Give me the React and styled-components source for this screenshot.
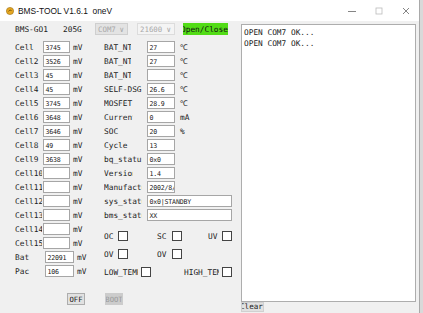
import React from 'react';
import styled, { createGlobalStyle } from 'styled-components';

const mono = '"DejaVu Sans Mono", "Liberation Mono", monospace';

const GlobalStyle = createGlobalStyle`
  html, body { margin: 0; padding: 0; background: #d9d9d9; }
  body { font-family: ${mono}; }
`;

const Window = styled.div`
  width: 419px;
  height: 313px;
  background: #f0f0f0;
  border-right: 1px solid #a9a9a9;
  display: flex;
  flex-direction: column;
  overflow: hidden;
  color: #222;
`;

const TitleBar = styled.div`
  height: 21px;
  flex: none;
  background: #fff;
  display: flex;
  align-items: center;
  padding-left: 6px;
  font: 8.4px "Liberation Sans", Arial, sans-serif;
  color: #111;
`;

const TitleText = styled.span`
  margin-left: 4px;
  white-space: pre;
`;

const Controls = styled.div`
  margin-left: auto;
  display: flex;
  height: 100%;
`;

const Ctrl = styled.div`
  width: 27px;
  display: flex;
  align-items: center;
  justify-content: center;
`;

const Body = styled.div`
  flex: 1;
  display: flex;
`;

const LeftPanel = styled.div`
  width: 241px;
  flex: none;
  display: flex;
  flex-direction: column;
  padding-left: 15px;
  box-sizing: border-box;
  font-size: 7.8px;
`;

const TopRow = styled.div`
  display: flex;
  align-items: center;
  height: 12px;
  margin-top: 2px;
`;

const TopLabel = styled.span`
  width: ${p => p.$w}px;
  flex: none;
`;

const Combo = styled.div`
  width: ${p => p.$w}px;
  height: 12px;
  box-sizing: border-box;
  margin-right: ${p => p.$mr || 0}px;
  border: 1px solid ${p => (p.$dark ? '#cfcfcf' : '#dcdcdc')};
  background: ${p => (p.$dark ? '#e3e3e3' : '#f4f4f4')};
  color: #a8a8a8;
  display: flex;
  align-items: center;
  justify-content: space-between;
  padding: 0 3px 0 2px;
  font-size: 7.4px;
`;

const GreenButton = styled.div`
  width: 45px;
  height: 12px;
  background: #52dc16;
  color: #111;
  font-size: 7.8px;
  overflow: hidden;
  white-space: nowrap;
  display: flex;
  align-items: center;
  justify-content: center;
  text-indent: -2px;
`;

const Columns = styled.div`
  display: flex;
  margin-top: 5px;
`;

const Column = styled.div`
  width: ${p => p.$w}px;
  flex: none;
  display: flex;
  flex-direction: column;
`;

const Row = styled.div`
  height: 14px;
  display: flex;
  align-items: center;
`;

const Label = styled.span`
  width: ${p => p.$w}px;
  margin-right: ${p => p.$mr || 0}px;
  flex: none;
  overflow: hidden;
  white-space: nowrap;
`;

const Field = styled.div`
  width: ${p => p.$w}px;
  height: 12px;
  flex: none;
  box-sizing: border-box;
  background: #fff;
  border: 1px solid #a6a6a6;
  padding: 2px 0 0 1.5px;
  font-size: 6.6px;
  letter-spacing: -0.2px;
  line-height: 9px;
  white-space: nowrap;
  overflow: hidden;
`;

const Unit = styled.span`
  margin-left: ${p => p.$ml || 3}px;
`;

const CheckRows = styled.div`
  margin-top: 5px;
  display: flex;
  flex-direction: column;
`;

const CheckRow = styled.div`
  height: 18px;
  display: grid;
  grid-template-columns: ${p => p.$cols};
  align-items: center;
`;

const CheckCell = styled.div`
  display: flex;
  align-items: center;
`;

const Box = styled.div`
  width: 10px;
  height: 10px;
  box-sizing: border-box;
  background: #fff;
  border: 1px solid #444;
`;

const SmallButton = styled.div`
  width: 18px;
  height: 12px;
  margin-left: ${p => p.$ml}px;
  margin-top: ${p => p.$mt}px;
  box-sizing: border-box;
  border: 1px solid ${p => (p.$disabled ? '#cccccc' : '#adadad')};
  background: ${p => (p.$disabled ? '#cccccc' : '#e1e1e1')};
  color: ${p => (p.$disabled ? '#9a9a9a' : '#222')};
  font-size: 7.2px;
  display: flex;
  align-items: center;
  justify-content: center;
  overflow: hidden;
  white-space: nowrap;
`;

const LogPanel = styled.div`
  width: 175px;
  display: flex;
  flex-direction: column;
  padding-top: 3px;
`;

const Log = styled.div`
  height: 278px;
  box-sizing: border-box;
  background: #fff;
  border: 1px solid #adadad;
  padding: 3px 2px;
  font-size: 7.8px;
  line-height: 10.5px;
`;

const ClearButton = styled.div`
  width: 23px;
  height: 10px;
  background: #e1e1e1;
  border: 1px solid #d0d0d0;
  box-sizing: border-box;
  font-size: 7.6px;
  line-height: 8px;
  overflow: hidden;
  white-space: nowrap;
  text-indent: -2px;
`;

const cells = [
  ['Cell', '3745'], ['Cell2', '3526'], ['Cell3', '45'], ['Cell4', '45'],
  ['Cell5', '3745'], ['Cell6', '3648'], ['Cell7', '3646'], ['Cell8', '49'],
  ['Cell9', '3638'], ['Cell10', ''], ['Cell11', ''], ['Cell12', ''],
  ['Cell13', ''], ['Cell14', ''], ['Cell15', ''],
];

// name, visible label width, value, unit
const info = [
  ['BAT_NTC1', 27, '27', '℃'], ['BAT_NTC2', 27, '27', '℃'], ['BAT_NTC3', 27, '', '℃'],
  ['SELF-DSG', 43, '26.6', '℃'], ['MOSFET', 43, '28.9', '℃'], ['Current', 29, '0', 'mA'],
  ['SOC', 43, '20', '%'], ['Cycle', 43, '13', ''], ['bq_status', 37.5, '0x0', ''],
  ['Version', 29, '1.4', ''], ['Manufacture', 38, '2002/8/', ''],
];

const Check = ({ label, w, mr }) => (
  <CheckCell>
    <Label $w={w} $mr={mr}>{label}</Label>
    <Box />
  </CheckCell>
);

export default function App() {
  return (
    <>
      <GlobalStyle />
      <Window>
        <TitleBar>
          <svg width="8" height="8" viewBox="0 0 8 8">
            <circle cx="4" cy="4" r="3.6" fill="#e6a822" stroke="#9a6d10" strokeWidth="0.6" />
            <path d="M2.4 4.4 Q4 2 5.6 3.6" stroke="#6b4a08" strokeWidth="0.8" fill="none" />
          </svg>
          <TitleText>BMS-TOOL V1.6.1  oneV</TitleText>
          <Controls>
            <Ctrl>
              <svg width="8" height="8" viewBox="0 0 8 8"><path d="M0 4.5h8" stroke="#666" strokeWidth="0.8" /></svg>
            </Ctrl>
            <Ctrl>
              <svg width="8" height="8" viewBox="0 0 8 8"><rect x="1" y="1" width="6" height="6" stroke="#bbb" strokeWidth="0.8" fill="none" /></svg>
            </Ctrl>
            <Ctrl>
              <svg width="8" height="8" viewBox="0 0 8 8"><path d="M1 1L7 7M7 1L1 7" stroke="#666" strokeWidth="0.8" /></svg>
            </Ctrl>
          </Controls>
        </TitleBar>
        <Body>
          <LeftPanel>
            <TopRow>
              <TopLabel $w={48}>BMS-GO1</TopLabel>
              <TopLabel $w={32}>205G</TopLabel>
              <Combo $w={33} $mr={9} $dark>COM7 <span>∨</span></Combo>
              <Combo $w={38} $mr={8}>21600 <span>∨</span></Combo>
              <GreenButton>Open/Close</GreenButton>
            </TopRow>
            <Columns>
              <Column $w={89}>
                {cells.map(([name, v]) => (
                  <Row key={name}>
                    <Label $w={26.5} $mr={1.5}>{name}</Label>
                    <Field $w={27}>{v}</Field>
                    <Unit>mV</Unit>
                  </Row>
                ))}
                <Row>
                  <Label $w={30}>Bat</Label>
                  <Field $w={29}>22091</Field>
                  <Unit>mV</Unit>
                </Row>
                <Row>
                  <Label $w={30}>Pac</Label>
                  <Field $w={29}>106</Field>
                  <Unit>mV</Unit>
                </Row>
                <SmallButton $ml={52} $mt={15}>OFF</SmallButton>
              </Column>
              <Column $w={130}>
                {info.map(([name, w, v, unit]) => (
                  <Row key={name}>
                    <Label $w={w} $mr={43 - w}>{name}</Label>
                    <Field $w={28}>{v}</Field>
                    {unit && <Unit $ml={5}>{unit}</Unit>}
                  </Row>
                ))}
                <Row>
                  <Label $w={38} $mr={5}>sys_status</Label>
                  <Field $w={85}>0x0|STANDBY</Field>
                </Row>
                <Row>
                  <Label $w={38} $mr={5}>bms_status</Label>
                  <Field $w={85}>XX</Field>
                </Row>
                <CheckRows>
                  <CheckRow $cols="53px 51px auto">
                    <Check label="OC" w={14} />
                    <Check label="SC" w={15} />
                    <Check label="UV" w={14} />
                  </CheckRow>
                  <CheckRow $cols="53px 51px auto">
                    <Check label="OV" w={14} />
                    <Check label="OV" w={15} />
                  </CheckRow>
                  <CheckRow $cols="80px auto">
                    <Check label="LOW_TEMP" w={33.5} mr={3.5} />
                    <Check label="HIGH_TEMP" w={35} mr={3} />
                  </CheckRow>
                </CheckRows>
                <SmallButton $ml={1} $mt={12} $disabled>BOOT</SmallButton>
              </Column>
            </Columns>
          </LeftPanel>
          <LogPanel>
            <Log>
              OPEN COM7 OK...<br />
              OPEN COM7 OK...
            </Log>
            <ClearButton>Clear</ClearButton>
          </LogPanel>
        </Body>
      </Window>
    </>
  );
}
